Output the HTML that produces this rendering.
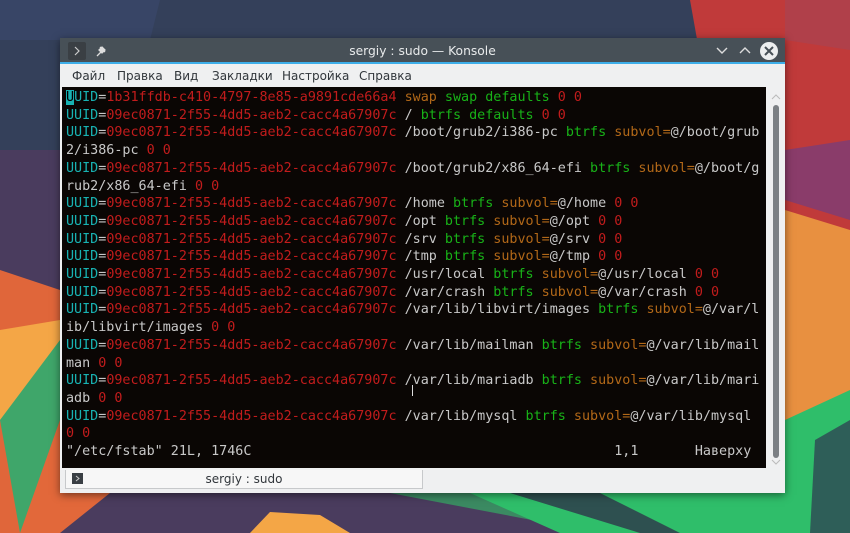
<!DOCTYPE html>
<html><head><meta charset="utf-8">
<style>
*{margin:0;padding:0;box-sizing:border-box}
html,body{width:850px;height:533px;overflow:hidden;background:#34405a;position:relative}
.bg{position:absolute;left:0;top:0;width:850px;height:533px}
.win{position:absolute;left:60px;top:38px;width:725px;height:455px;background:#eff0f1;box-shadow:0 2px 8px rgba(0,0,0,.5)}
.title{position:absolute;left:0;top:0;width:725px;height:26px;background:#475057;border-bottom:2px solid #3daee9;color:#e8eaeb;font:12.3px "DejaVu Sans","Liberation Sans",sans-serif;text-align:center;line-height:26px}
.menu{position:absolute;left:0;top:27px;height:22px;font:12px "DejaVu Sans","Liberation Sans",sans-serif;color:#31363b;line-height:22px}
.menu span{position:absolute;white-space:nowrap}
.term{position:absolute;left:2px;top:49px;width:704px;height:381px;background:#0a0604;overflow:hidden}
pre{position:absolute;left:4px;top:2px;font:13.4px/17.7px "DejaVu Sans Mono","Liberation Mono",monospace;color:#c8c8c8;white-space:pre}
.c{color:#18b2b2}.r{color:#c21c1c}.y{color:#b26818}.g{color:#18b218}
.cur{background:#18b2b2;color:#000}
.sb{position:absolute;left:708px;top:49px;width:16px;height:381px}
.tabbar{position:absolute;left:0;top:430px;width:725px;height:25px}
.tab{position:absolute;left:5px;top:2px;width:358px;height:19px;background:#f7f7f7;border:1px solid #c7c9cb;border-top:none;font:12px "DejaVu Sans","Liberation Sans",sans-serif;color:#31363b;text-align:center;line-height:18px}
</style></head><body>
<svg class="bg" viewBox="0 0 850 533">
<rect width="850" height="533" fill="#34405a"/>
<polygon points="0,0 160,0 150,40 0,40" fill="#384566"/>
<polygon points="0,150 850,150 850,533 0,533" fill="#4a3c5e"/>
<polygon points="0,270 60,290 60,533 0,533" fill="#e0663a"/>
<polygon points="0,330 60,320 60,360 0,420" fill="#f4a646"/>
<polygon points="0,420 60,340 60,533 20,533" fill="#3fa66a"/>
<polygon points="20,533 60,420 60,533" fill="#e2683a"/>
<polygon points="690,0 850,0 850,533 785,533" fill="#c03a3a"/>
<polygon points="785,0 850,0 850,50 785,40" fill="#b0404a"/>
<polygon points="785,150 850,140 850,220 785,200" fill="#8a3c6a"/>
<polygon points="785,210 850,230 850,400 785,430" fill="#e89040"/>
<polygon points="785,420 850,390 850,533 785,533" fill="#2fbe6a"/>
<polygon points="815,440 850,420 850,533 810,533" fill="#2e5e58"/>
<polygon points="60,493 110,493 60,533" fill="#e2683a"/>
<polygon points="250,533 270,512 320,515 350,533" fill="#f4a646"/>
<polygon points="390,493 550,493 680,533 600,533" fill="#3b8a62"/>
<polygon points="470,493 785,493 785,533 560,533" fill="#2fbe6a"/>
<polygon points="510,493 600,493 680,533 640,533" fill="#2e5050"/>
</svg>
<div class="win">
<div class="title">
<svg style="position:absolute;left:8px;top:4px" width="18" height="18"><rect width="18" height="18" rx="2" fill="#3a3f44"/><path d="M7 5l4 4-4 4" stroke="#ccc" fill="none" stroke-width="1.2"/></svg>
<svg style="position:absolute;left:34px;top:6px" width="14" height="14"><path d="M3 12l4-4M6 3l5 5M5 6l3-3 3 3-3 3z" stroke="#ddd" fill="#ddd" stroke-width="1.3"/></svg>
sergiy : sudo — Konsole
<svg style="position:absolute;left:655px;top:7px" width="14" height="12"><path d="M2 3l5 5 5-5" stroke="#ddd" fill="none" stroke-width="1.4"/></svg>
<svg style="position:absolute;left:678px;top:7px" width="14" height="12"><path d="M2 8l5-5 5 5" stroke="#ddd" fill="none" stroke-width="1.4"/></svg>
<svg style="position:absolute;left:699px;top:3px" width="20" height="20"><circle cx="10" cy="10" r="9" fill="#eceeef"/><path d="M6 6l8 8M14 6l-8 8" stroke="#475057" stroke-width="2"/></svg>
</div>
<div class="menu">
<span style="left:12px">Файл</span><span style="left:57px">Правка</span><span style="left:114px">Вид</span><span style="left:152px">Закладки</span><span style="left:222px">Настройка</span><span style="left:299px">Справка</span>
</div>
<div class="term"><pre><span class="cur">U</span><span class="c">UID</span>=<span class="r">1b31ffdb-c410-4797-8e85-a9891cde66a4</span> <span class="y">swap</span> <span class="g">swap defaults</span> <span class="r">0 0</span>
<span class="c">UUID</span>=<span class="r">09ec0871-2f55-4dd5-aeb2-cacc4a67907c</span> / <span class="g">btrfs defaults</span> <span class="r">0 0</span>
<span class="c">UUID</span>=<span class="r">09ec0871-2f55-4dd5-aeb2-cacc4a67907c</span> /boot/grub2/i386-pc <span class="g">btrfs</span> <span class="y">subvol=</span>@/boot/grub
2/i386-pc <span class="r">0 0</span>
<span class="c">UUID</span>=<span class="r">09ec0871-2f55-4dd5-aeb2-cacc4a67907c</span> /boot/grub2/x86_64-efi <span class="g">btrfs</span> <span class="y">subvol=</span>@/boot/g
rub2/x86_64-efi <span class="r">0 0</span>
<span class="c">UUID</span>=<span class="r">09ec0871-2f55-4dd5-aeb2-cacc4a67907c</span> /home <span class="g">btrfs</span> <span class="y">subvol=</span>@/home <span class="r">0 0</span>
<span class="c">UUID</span>=<span class="r">09ec0871-2f55-4dd5-aeb2-cacc4a67907c</span> /opt <span class="g">btrfs</span> <span class="y">subvol=</span>@/opt <span class="r">0 0</span>
<span class="c">UUID</span>=<span class="r">09ec0871-2f55-4dd5-aeb2-cacc4a67907c</span> /srv <span class="g">btrfs</span> <span class="y">subvol=</span>@/srv <span class="r">0 0</span>
<span class="c">UUID</span>=<span class="r">09ec0871-2f55-4dd5-aeb2-cacc4a67907c</span> /tmp <span class="g">btrfs</span> <span class="y">subvol=</span>@/tmp <span class="r">0 0</span>
<span class="c">UUID</span>=<span class="r">09ec0871-2f55-4dd5-aeb2-cacc4a67907c</span> /usr/local <span class="g">btrfs</span> <span class="y">subvol=</span>@/usr/local <span class="r">0 0</span>
<span class="c">UUID</span>=<span class="r">09ec0871-2f55-4dd5-aeb2-cacc4a67907c</span> /var/crash <span class="g">btrfs</span> <span class="y">subvol=</span>@/var/crash <span class="r">0 0</span>
<span class="c">UUID</span>=<span class="r">09ec0871-2f55-4dd5-aeb2-cacc4a67907c</span> /var/lib/libvirt/images <span class="g">btrfs</span> <span class="y">subvol=</span>@/var/l
ib/libvirt/images <span class="r">0 0</span>
<span class="c">UUID</span>=<span class="r">09ec0871-2f55-4dd5-aeb2-cacc4a67907c</span> /var/lib/mailman <span class="g">btrfs</span> <span class="y">subvol=</span>@/var/lib/mail
man <span class="r">0 0</span>
<span class="c">UUID</span>=<span class="r">09ec0871-2f55-4dd5-aeb2-cacc4a67907c</span> /var/lib/mariadb <span class="g">btrfs</span> <span class="y">subvol=</span>@/var/lib/mari
adb <span class="r">0 0</span>
<span class="c">UUID</span>=<span class="r">09ec0871-2f55-4dd5-aeb2-cacc4a67907c</span> /var/lib/mysql <span class="g">btrfs</span> <span class="y">subvol=</span>@/var/lib/mysql
<span class="r">0 0</span>
"/etc/fstab" 21L, 1746C                                             1,1       Наверху</pre>
<div style="position:absolute;left:350px;top:298px;width:1px;height:11px;background:#ddd"></div>
</div>
<div class="sb">
<svg width="16" height="381"><path d="M4 12l4-4 4 4" stroke="#bbb" fill="none"/><rect x="5" y="18" width="6" height="353" rx="3" fill="#7c8084"/><path d="M4 373l4 4 4-4" stroke="#bbb" fill="none"/></svg>
</div>
<div class="tabbar"><div class="tab"><svg style="position:absolute;left:6px;top:3px" width="11" height="11"><rect width="11" height="11" fill="#3a3f44"/><path d="M4 3l3 2.5-3 2.5" stroke="#ccc" fill="none"/></svg>sergiy : sudo</div></div>
</div>
</body></html>
